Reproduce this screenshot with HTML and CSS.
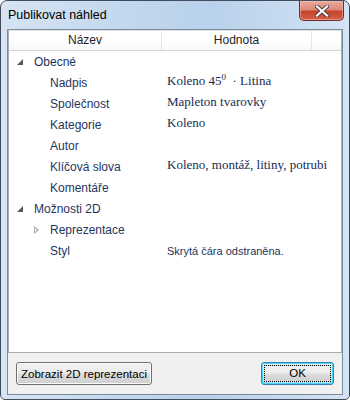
FILE: index.html
```html
<!DOCTYPE html>
<html lang="cs">
<head>
    <meta charset="UTF-8">
    <title>Publikovat náhled</title>
    <link rel="stylesheet" href="styles.css">
</head>
<body>
    <div class="window">
        <div class="titlebar">
            <span class="title">Publikovat náhled</span>
            <div class="close">
                <svg width="14" height="12" viewBox="0 0 14 12">
                    <path d="M2 1.5 L12 10.5 M12 1.5 L2 10.5" stroke="#4a3a3a" stroke-width="4" stroke-linecap="square"/>
                    <path d="M2 1.5 L12 10.5 M12 1.5 L2 10.5" stroke="#ffffff" stroke-width="2.2" stroke-linecap="square"/>
                </svg>
            </div>
        </div>

        <div class="client">
            <div class="list">
                <div class="list-head">
                    <div class="col col-name">Název</div>
                    <div class="col col-value">Hodnota</div>
                    <div class="col col-rest"></div>
                </div>

                <div class="rows">
                    <div class="row group">
                        <span class="name"><span class="expander open"></span>Obecné</span>
                    </div>
                    <div class="row">
                        <span class="name">Nadpis</span>
                        <span class="value serif">Koleno 45<sup>0</sup> &nbsp;· Litina</span>
                    </div>
                    <div class="row">
                        <span class="name">Společnost</span>
                        <span class="value serif">Mapleton tvarovky</span>
                    </div>
                    <div class="row">
                        <span class="name">Kategorie</span>
                        <span class="value serif">Koleno</span>
                    </div>
                    <div class="row">
                        <span class="name">Autor</span>
                        <span class="value"></span>
                    </div>
                    <div class="row">
                        <span class="name">Klíčová slova</span>
                        <span class="value serif">Koleno, montáž, litiny, potrubi</span>
                    </div>
                    <div class="row">
                        <span class="name">Komentáře</span>
                        <span class="value"></span>
                    </div>
                    <div class="row group">
                        <span class="name"><span class="expander open"></span>Možnosti 2D</span>
                    </div>
                    <div class="row">
                        <span class="name"><span class="expander closed"></span>Reprezentace</span>
                        <span class="value"></span>
                    </div>
                    <div class="row">
                        <span class="name">Styl</span>
                        <span class="value plain">Skrytá čára odstraněna.</span>
                    </div>
                </div>
            </div>

            <div class="footer">
                <button class="btn">Zobrazit 2D reprezentaci</button>
                <button class="btn btn-default"><span class="focus">OK</span></button>
            </div>
        </div>
    </div>
</body>
</html>
```

FILE: styles.css
```css
* {
    margin: 0;
    padding: 0;
    box-sizing: border-box;
}

body {
    width: 350px;
    height: 400px;
    overflow: hidden;
    font-family: 'Liberation Sans', Arial, sans-serif;
    font-size: 12px;
}

.window {
    width: 350px;
    height: 400px;
    border: 1px solid #404c5c;
    border-radius: 7px 7px 5px 5px;
    background: linear-gradient(90deg, #d6e4f3 0%, #c2d8ee 35%, #b9d1eb 60%, #c9dcf0 85%, #d5e4f4 100%);
    padding: 0 6px 4px;
    display: flex;
    flex-direction: column;
}

.titlebar {
    height: 28px;
    display: flex;
    justify-content: space-between;
    align-items: flex-start;
}

.title {
    padding: 7px 0 0 1px;
    color: #000;
    font-size: 12.5px;
}

.close {
    width: 45px;
    height: 20px;
    margin-right: -1px;
    border: 1px solid #6b2f26;
    border-top: none;
    border-radius: 0 0 5px 5px;
    background: linear-gradient(180deg, #e9a99c 0%, #dc8a7b 45%, #c7432c 55%, #d4604a 100%);
    box-shadow: inset 0 0 0 1px rgba(255, 200, 190, 0.5);
    display: flex;
    align-items: center;
    justify-content: center;
}

.client {
    flex: 1;
    border: 1px solid #7a8ba0;
    background: #f0f0f0;
    display: flex;
    flex-direction: column;
}

.list {
    height: 323px;
    background: #fff;
    border: 1px solid #abadb3;
    border-top-color: #e3e3e3;
}

.list-head {
    height: 20px;
    display: flex;
    border-bottom: 1px solid #d5d5d5;
    background: linear-gradient(180deg, #ffffff 0%, #ffffff 50%, #f7f8fa 100%);
    color: #1e1e1e;
}

.col {
    height: 19px;
    line-height: 18px;
    text-align: center;
    border-right: 1px solid #e3e5e8;
}

.col-name {
    width: 153px;
}

.col-value {
    width: 150px;
}

.col-rest {
    flex: 1;
    border-right: none;
}

.rows {
    display: flex;
    flex-direction: column;
}

.row {
    height: 21px;
    display: grid;
    grid-template-columns: 153px 1fr;
    align-items: center;
    color: #1e3560;
}

.name {
    display: flex;
    align-items: center;
    padding-left: 41px;
}

.group .name {
    padding-left: 8px;
}

.expander {
    width: 17px;
    height: 8px;
    position: relative;
    flex: none;
}

.row:not(.group) .expander {
    margin-left: -16px;
    width: 16px;
}

.expander.open::before {
    content: "";
    position: absolute;
    left: 0;
    top: 1px;
    border-style: solid;
    border-width: 0 0 6px 6px;
    border-color: transparent transparent #595959 transparent;
}

.expander.closed::before {
    content: "";
    position: absolute;
    left: 0;
    top: 0;
    border-style: solid;
    border-width: 4px 0 4px 5px;
    border-color: transparent transparent transparent #a6a6a6;
}

.expander.closed::after {
    content: "";
    position: absolute;
    left: 1px;
    top: 2px;
    border-style: solid;
    border-width: 2px 0 2px 2px;
    border-color: transparent transparent transparent #fff;
}

.value {
    padding-left: 5px;
    white-space: nowrap;
}

.serif {
    font-family: 'Liberation Serif', 'Times New Roman', serif;
    font-size: 13px;
    color: #1a2b52;
    margin-top: -3px;
}

.serif sup {
    font-size: 9px;
}

.plain {
    font-size: 11px;
}

.footer {
    display: flex;
    justify-content: space-between;
    padding: 9px 8px 0;
}

.btn {
    height: 23px;
    border: 1px solid #707070;
    border-radius: 3px;
    background: linear-gradient(180deg, #f2f2f2 0%, #ebebeb 48%, #dddddd 52%, #cfcfcf 100%);
    box-shadow: inset 0 0 0 1px #fcfcfc;
    font-family: 'Liberation Sans', Arial, sans-serif;
    font-size: 11.5px;
    color: #000;
    padding: 0;
    width: 136px;
    white-space: nowrap;
}

.btn-default {
    width: 73px;
    border-color: #3c7fb1;
    box-shadow: inset 0 0 0 1px #48d4f8;
    padding: 2px;
    background: linear-gradient(180deg, #eaf6fd 0%, #d9f0fc 48%, #bee6fd 52%, #a7d9f5 100%);
}

.btn-default .focus {
    display: block;
    height: 100%;
    line-height: 15px;
    border: 1px dotted #000;
    background: linear-gradient(180deg, #f2f2f2 0%, #ebebeb 48%, #dddddd 52%, #cfcfcf 100%);
}
```
